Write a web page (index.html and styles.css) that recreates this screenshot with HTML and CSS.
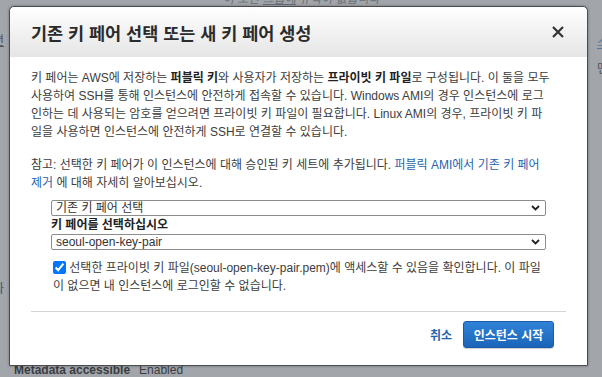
FILE: index.html
```html
<!DOCTYPE html>
<html lang="ko">
<head>
    <meta charset="UTF-8">
    <meta name="viewport" content="width=device-width, initial-scale=1.0">
    <title>기존 키 페어 선택 또는 새 키 페어 생성</title>
    <link rel="stylesheet" href="styles.css">
</head>
<body>
    <!-- 모달 뒤의 페이지 (어둡게 덮여 있음) -->
    <div class="page">
        <div class="page-top"><i>이 보안 <u>그룹에</u> 규칙이 없습니다</i></div>
        <div class="page-mid">
            <div class="page-left">
                <a href="#" class="back-link">편</a>
                <span class="back-mark">화</span>
            </div>
            <div class="page-right">
                <a href="#" class="back-link">스</a>
                <span>맨</span>
            </div>
        </div>
        <div class="page-bottom"><b>Metadata accessible</b><span>Enabled</span></div>
    </div>

    <div class="modal">
        <header class="modal-header">
            <h1>기존 키 페어 선택 또는 새 키 페어 생성</h1>
            <button class="close" type="button">
                <svg width="12" height="12" viewBox="0 0 12 12"><path d="M1 1 L11 11 M11 1 L1 11" stroke="#333" stroke-width="2.2" fill="none"/></svg>
            </button>
        </header>
        <div class="modal-body">
            <p class="lines">키 페어는 AWS에 저장하는 <b>퍼블릭 키</b>와 사용자가 저장하는 <b>프라이빗 키 파일</b>로 구성됩니다. 이 둘을 모두<br>사용하여 SSH를 통해 인스턴스에 안전하게 접속할 수 있습니다. Windows AMI의 경우 인스턴스에 로그<br>인하는 데 사용되는 암호를 얻으려면 프라이빗 키 파일이 필요합니다. Linux AMI의 경우, 프라이빗 키 파<br>일을 사용하면 인스턴스에 안전하게 SSH로 연결할 수 있습니다.</p>
            <p class="lines note">참고: 선택한 키 페어가 이 인스턴스에 대해 승인된 키 세트에 추가됩니다. <a href="#">퍼블릭 AMI에서 기존 키 페어<br>제거</a> 에 대해 자세히 알아보십시오.</p>
            <div class="form">
                <div class="select">
                    <span>기존 키 페어 선택</span>
                    <svg width="9" height="6" viewBox="0 0 9 6"><path d="M1 1 L4.5 4.5 L8 1" stroke="#222" stroke-width="1.8" fill="none"/></svg>
                </div>
                <label class="label">키 페어를 선택하십시오</label>
                <div class="select">
                    <span>seoul-open-key-pair</span>
                    <svg width="9" height="6" viewBox="0 0 9 6"><path d="M1 1 L4.5 4.5 L8 1" stroke="#222" stroke-width="1.8" fill="none"/></svg>
                </div>
                <p class="lines confirm"><input type="checkbox" checked> 선택한 프라이빗 키 파일(seoul-open-key-pair.pem)에 액세스할 수 있음을 확인합니다. 이 파일<br>이 없으면 내 인스턴스에 로그인할 수 없습니다.</p>
            </div>
        </div>
        <footer class="modal-footer">
            <a href="#" class="cancel">취소</a>
            <button class="primary" type="button">인스턴스 시작</button>
        </footer>
    </div>
</body>
</html>
```

FILE: styles.css
```css
html, body {
    margin: 0;
    height: 100%;
}
body {
    background-color: #a2a6ab;
    font-family: 'Liberation Sans', 'Noto Sans CJK KR', sans-serif;
    font-size: 12px;
    color: #3a3d41;
    overflow: hidden;
    position: relative;
}
.page {
    height: 100%;
    display: flex;
    flex-direction: column;
    line-height: 14px;
}
.page-top {
    margin-top: -8px;
    padding-left: 223px;
    height: 14px;
    color: #6c7075;
    font-size: 12px;
}
.page-mid {
    flex: 1;
    display: flex;
    justify-content: space-between;
}
.page-left, .page-right {
    display: flex;
    flex-direction: column;
}
.page-left {
    margin-left: -7px;
    padding-top: 28px;
    color: #50545a;
}
.page-left .back-mark {
    margin-top: 234px;
}
.page-right {
    margin-right: -6px;
    padding-top: 30px;
    color: #50545a;
    gap: 12px;
}
.back-link {
    color: #55779c;
}
.page-left .back-link {
    color: #50545a;
}
.page-bottom {
    padding: 0 0 0 14px;
    color: #3a3d41;
    display: flex;
    gap: 9px;
}
.modal {
    position: absolute;
    left: 9px;
    top: 6px;
    width: 577px;
    height: 358px;
    background-color: #ffffff;
    border: 1px solid #4a4c50;
    border-radius: 5px 5px 0 0;
    box-shadow: 0 0 3px rgba(0, 0, 0, 0.35);
    display: flex;
    flex-direction: column;
}
.modal-header {
    height: 50px;
    padding: 0 23px 0 21px;
    display: flex;
    align-items: center;
    justify-content: space-between;
    background: linear-gradient(#ffffff, #e5e5e5);
    border-radius: 5px 5px 0 0;
}
.modal-header h1 {
    margin: 0;
    font-size: 17.5px;
    font-weight: bold;
    color: #2b2b2b;
}
.close {
    border: none;
    background: none;
    padding: 0;
    width: 12px;
    height: 12px;
    display: flex;
}
.modal-body {
    padding: 12px 21px 0 21px;
    flex: 1;
}
.lines {
    margin: 0;
    line-height: 18px;
    white-space: nowrap;
    color: #3c3c3c;
}
.lines b {
    color: #222;
}
.note {
    margin-top: 15px;
}
.note a {
    color: #1f63b0;
    text-decoration: none;
}
.form {
    margin: 8px 20px 0 20px;
}
.select {
    height: 14px;
    border: 1px solid #8c8c8c;
    border-radius: 2px;
    padding: 0 5px 0 4px;
    display: flex;
    align-items: center;
    justify-content: space-between;
    color: #333;
    line-height: 14px;
}
.label {
    display: block;
    font-weight: bold;
    color: #222;
    line-height: 18px;
}
.confirm {
    margin-top: 9px;
    padding-left: 2px;
}
.confirm input {
    width: 13px;
    height: 13px;
    margin: 0;
    vertical-align: -2px;
    accent-color: #0075ff;
}
.modal-footer {
    margin: 0 21px;
    border-top: 1px solid #d5d5d5;
    padding: 9px 12px 17px 0;
    display: flex;
    justify-content: flex-end;
    align-items: center;
    gap: 11px;
}
.cancel {
    color: #1f63b0;
    text-decoration: none;
    font-weight: bold;
}
.primary {
    width: 91px;
    height: 27px;
    border: 1px solid #1b5aa6;
    border-radius: 3px;
    background: linear-gradient(#3183d8, #1a64b8);
    color: #ffffff;
    font-family: 'Liberation Sans', 'Noto Sans CJK KR', sans-serif;
    font-size: 12px;
    font-weight: bold;
    box-shadow: 0 1px 1px rgba(0, 0, 0, 0.2);
}
```
